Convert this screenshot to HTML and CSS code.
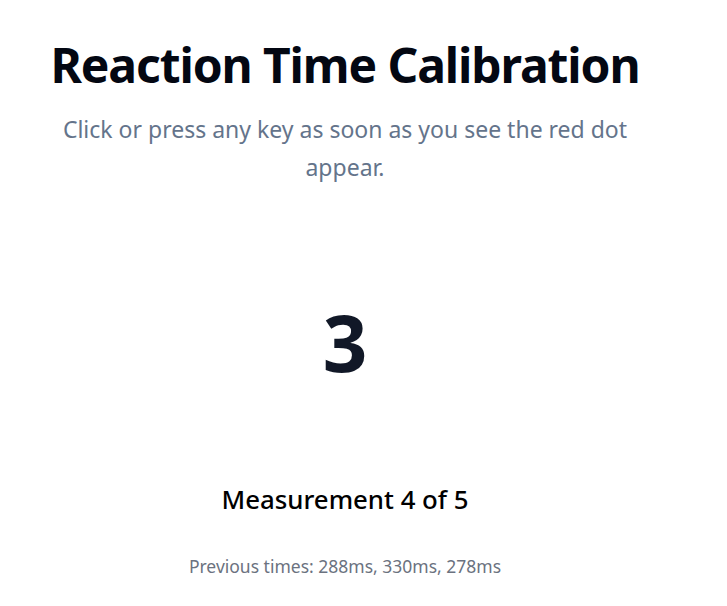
FILE: index.html
```html
<!DOCTYPE html>
<html lang="en">
<head>
<meta charset="utf-8">
<title>Reaction Time Calibration</title>
<link rel="stylesheet" href="styles.css">
</head>
<body>
<main class="page">
  <h1 class="title">Reaction Time Calibration</h1>
  <p class="subtitle">Click or press any key as soon as you see the red dot appear.</p>
  <div class="stage">
    <div class="countdown">3</div>
  </div>
  <h2 class="progress">Measurement 4 of 5</h2>
  <p class="history">Previous times: 288ms, 330ms, 278ms</p>
</main>
</body>
</html>
```
FILE: styles.css
```css
html, body {
  margin: 0;
  padding: 0;
  background: #ffffff;
}
body {
  font-family: "Noto Sans", "Open Sans", sans-serif;
}
.page {
  width: 690px;
  display: flex;
  flex-direction: column;
  align-items: center;
  text-align: center;
  padding-top: 36px;
}
.title {
  margin: 0;
  font-size: 48px;
  line-height: 58px;
  font-weight: 700;
  letter-spacing: -1.1px;
  color: #030712;
}
.subtitle {
  margin: 16px 0 0;
  max-width: 580px;
  font-size: 23px;
  line-height: 38px;
  color: #64748b;
}
.stage {
  height: 296px;
  display: flex;
  align-items: center;
  justify-content: center;
  box-sizing: border-box;
  padding: 117px 0 101px;
}
.countdown {
  font-size: 78px;
  line-height: 78px;
  font-weight: 700;
  color: #111827;
}
.progress {
  margin: 0;
  font-size: 25.8px;
  line-height: 34px;
  font-weight: 500;
  color: #000000;
}
.history {
  margin: 38px 0 0;
  font-size: 17.5px;
  line-height: 24px;
  color: #6b7280;
}
```
